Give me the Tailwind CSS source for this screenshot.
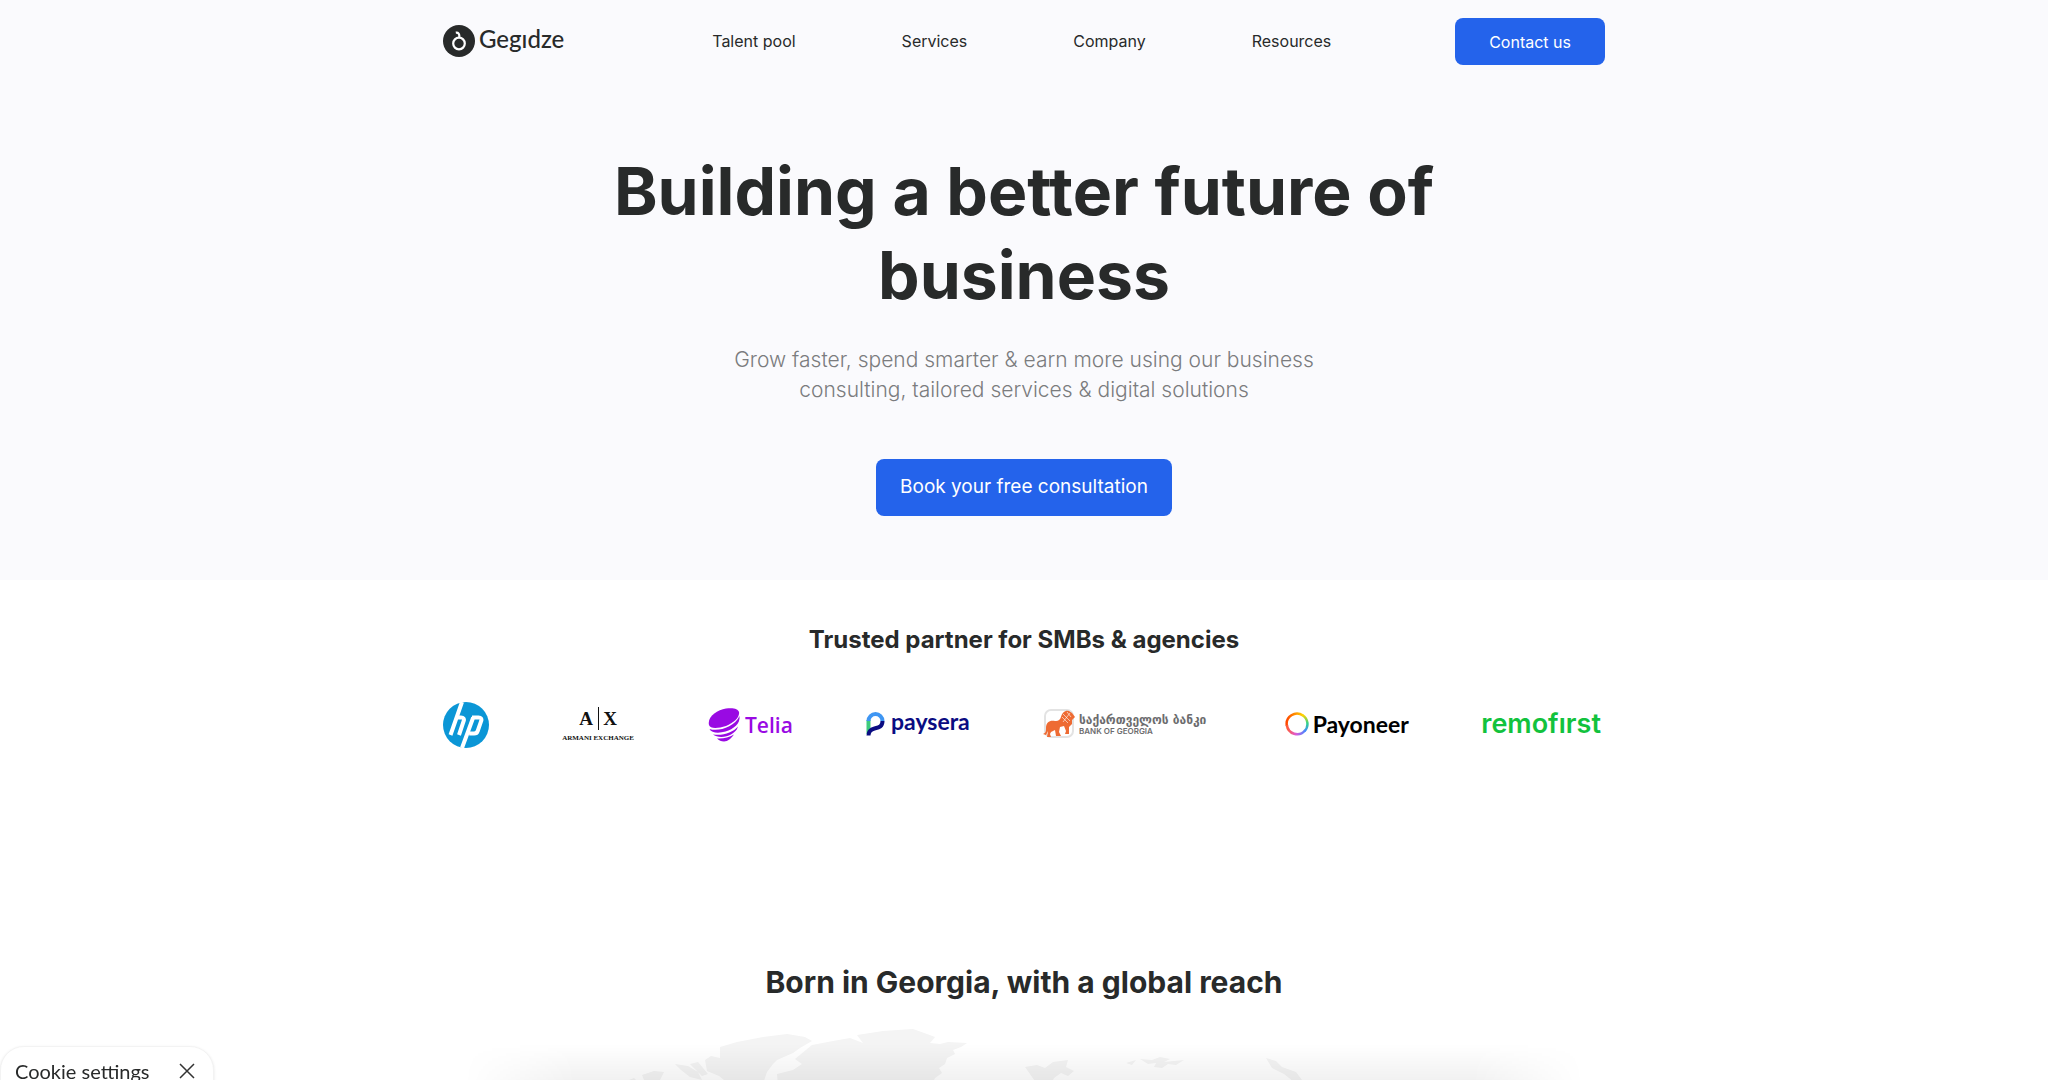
<!DOCTYPE html>
<html lang="en">
<head>
  <meta charset="UTF-8">
  <meta name="viewport" content="width=device-width, initial-scale=1.0">
  <title>Gegidze</title>
  <script src="https://cdn.jsdelivr.net/npm/@tailwindcss/browser@4"></script>
</head>
<body class="bg-white text-[#282a2a] font-['Inter',sans-serif] h-screen overflow-hidden flex flex-col">

  <!-- Hero -->
  <div class="bg-[#fafafd] pb-16 shrink-0">
    <header class="max-w-[1162px] mx-auto pt-[18px] flex items-center justify-between">
      <a href="#" class="flex items-center gap-1 pb-0.5">
        <svg class="size-8" viewBox="0 0 32 32" fill="none">
          <circle cx="16" cy="16" r="16" fill="#282a2a"/>
          <circle cx="16" cy="18.500" r="5.800" stroke="#fff" stroke-width="2.200"/>
          <path d="M12.800 7.600c2.600-.4 3.900 1.400 3.500 4.800" stroke="#fff" stroke-width="2.200"/>
        </svg>
        <span class="text-2xl leading-8 pb-1 font-medium font-['Lato',sans-serif]">Gegıdze</span>
      </a>
      <nav class="flex gap-[106px] ml-6 pb-0.5 text-base">
        <a href="#">Talent pool</a>
        <a href="#">Services</a>
        <a href="#">Company</a>
        <a href="#">Resources</a>
      </nav>
      <button class="bg-[#2463eb] text-white text-base px-[34px] h-[47px] rounded-lg">Contact us</button>
    </header>

    <main class="text-center pt-[84px]">
      <h1 class="max-w-[900px] mx-auto text-[66px] leading-[84px] font-bold">Building a better future of business</h1>
      <p class="max-w-[620px] mx-auto mt-7 text-[21px] leading-[30px] font-light text-[#7b7c7e]">Grow faster, spend smarter &amp; earn more using our business consulting, tailored services &amp; digital solutions</p>
      <button class="mt-[54px] bg-[#2463eb] text-white text-[19px] px-6 h-[57px] rounded-lg">Book your free consultation</button>
    </main>
  </div>

  <!-- Partners -->
  <section class="pt-10 shrink-0">
    <h2 class="text-center text-2xl leading-10 font-bold">Trusted partner for SMBs &amp; agencies</h2>
    <div class="max-w-[1162px] mx-auto mt-10 pr-1 h-[50px] flex items-center justify-between">
      <svg class="size-[46px]" viewBox="0 0 46 46" role="img" aria-label="HP">
        <circle cx="23" cy="23" r="23" fill="#0b96d6"/>
        <g fill="none" stroke="#fff" stroke-width="4">
          <path d="M19 0 7.500 33M12.500 15.500h5.500c2.500 0 3.400 1.200 2.700 3.500L16 33"/>
          <path d="M30.200 15.500 19 46M29 15.500h6.500c2.500 0 3.400 1.200 2.700 3.500l-3.500 10c-.6 1.800-1.700 2.500-3.500 2.500h-5"/>
        </g>
      </svg>

      <svg class="w-[74px] h-10" viewBox="0 0 74 40" text-anchor="middle" font-family="Liberation Serif, serif" fill="#111">
        <text x="25" y="20" font-size="19" font-weight="bold">A</text>
        <path d="M37 2h1v23h-1z"/>
        <text x="49" y="20" font-size="19" font-weight="bold">X</text>
        <text x="37" y="35" font-size="7" font-weight="bold">ARMANI EXCHANGE</text>
      </svg>

      <svg class="w-[86px] h-10" viewBox="0 0 86 40" fill="#990ae3">
        <path d="M1 20C-1 12 9 5 18 3.500c7-1 12 0 13 3.500 1 5-5 11-13 14-8 2.500-16 3-17-1z"/>
        <path d="M1.500 24c9 3 25-2 30-13 1 8-6 13-14 15.500-7 2-14 1.500-16-2.500z"/>
        <path d="M5 29.500c10 1.500 20-2 25-8-1 4-4 6-7 8-5 3-14 3.500-18 0z"/>
        <path d="M9 33.500c6 .5 12-1 17-4-3 4-6 7-10 7-3 0-5-1-7-3z"/>
        <text x="37" y="28" font-size="21" font-weight="600" font-family="Open Sans, sans-serif">Telia</text>
      </svg>

      <svg class="w-[104px] h-10" viewBox="0 0 104 40" fill="none">
        <path d="M2.500 29V15" stroke="#3ecb7d" stroke-width="4"/>
        <path d="M2.500 16a7 7 0 0 1 14 0" stroke="#3f96f3" stroke-width="4"/>
        <path d="M16.500 16c0 6-4 6.500-8 7.500s-6 3-6 7" stroke="#0a0c82" stroke-width="4"/>
        <text x="25" y="25" font-size="23" font-weight="700" font-family="Lato, sans-serif" fill="#0a0c82">paysera</text>
      </svg>

      <svg class="w-[170px] h-10" viewBox="0 0 170 40">
        <rect x="3" y="5" width="28" height="27" rx="6" fill="#fff" stroke="#e3e3e3" stroke-width="2"/>
        <path d="M1 29c3-1 3-3 3-6 0-6 4-8 9-7 3 .5 5-1 6-4 1-4 4-7 8-6l3 2 3 4-3 3v4l-3 3v7h-4l1-3-2-5-4 1-1 5 2 4h-5l-1-6-4 2-1 2 1 3H5l1-6-2 4z" fill="#ee6b33"/>
        <path d="M21 9l7 7M20 12l6 6M25 7l4 5M28 8l-7 9" stroke="#fff" stroke-width=".6"/>
        <g fill="#6c6c6e">
          <text x="37" y="19" font-size="12" font-weight="bold" font-family="DejaVu Sans, sans-serif">საქართველოს ბანკი</text>
          <text x="37" y="29" font-size="8" font-weight="600" font-family="Inter, sans-serif">BANK OF GEORGIA</text>
        </g>
      </svg>

      <div class="flex items-center gap-1 pb-0.5">
        <svg class="size-6" viewBox="0 0 24 24" fill="none" stroke-width="2.500">
          <defs>
            <linearGradient id="warm" x1="0" y1="0" x2="1" y2="0"><stop stop-color="#ff4800"/><stop offset="1" stop-color="#ffd400"/></linearGradient>
            <linearGradient id="cool" x1="0" y1="0" x2="0" y2="1"><stop stop-color="#ffd400"/><stop offset=".5" stop-color="#2fd38b"/><stop offset="1" stop-color="#3f8cff"/></linearGradient>
            <linearGradient id="pink" x1="0" y1="0" x2="1" y2="0"><stop stop-color="#ff5a36"/><stop offset=".5" stop-color="#dd5ad8"/><stop offset="1" stop-color="#4a86ff"/></linearGradient>
          </defs>
          <path d="M1.900 14A10.300 10.300 0 0 1 18 3.600" stroke="url(#warm)"/>
          <path d="M17.500 3.200a10.300 10.300 0 0 1 2 16" stroke="url(#cool)"/>
          <path d="M20 18.500A10.300 10.300 0 0 1 1.900 13" stroke="url(#pink)"/>
        </svg>
        <span class="text-[23px] leading-6 font-bold text-black font-['Lato',sans-serif]">Payoneer</span>
      </div>

      <span class="text-[27px] leading-8 pb-0.5 font-semibold text-[#12c23d]">remofırst</span>
    </div>
  </section>

  <!-- World map -->
  <section class="relative pt-[210px] grow flex flex-col">
    <h2 class="text-center text-[30px] leading-[44px] font-bold">Born in Georgia, with a global reach</h2>
    <div class="max-w-[1180px] w-full mx-auto grow">
      <svg class="w-full h-[80px]" viewBox="0 0 1180 80" fill="#f4f4f4">
        <path d="M286 43l17-5 26-5 24-3 18 3 7 4-12 7-7 5-16 7-4 4-6 8-4 12h-34l-10-8-12-5-2-11 6-4 9 2z"/>
        <path d="M378 41l21-4 17-3 13 5-6-8 26-4 30-2 14 5 8 3-5 6 10 1 8-2 19 1-6 4-8 3 2 4-8 4-2 6-6 4 3 5-7 5-4 8H344l-1-12 16-4 9-6-7-5z"/>
        <path d="M241 60l13 2 10 6 4 8-12-3-9-7zM208 71l12-4 10 1-4 8h-16zM256 60l8-2 10 12-6 2zM190 78l10-4 6 6h-18z"/>
        <path d="M591 63l12-2 8 3 8-6 15-2-2 7 8 4-6 5-7-3-7 5-3 6h-14zM692 59l10-3-4 5zM706 55l12 1 8-3 10 2-6 3 20-2-8 5-8-1-6 4-8-1 2-4-8 1zM832 54l10 3 6 6 14 5 6 8-8 2-10-8-12-6z"/>
      </svg>
    </div>
    <div class="absolute bottom-0 inset-x-0 max-w-[1120px] mx-auto h-10 bg-linear-to-b from-black/0 to-black/6 mask-x-from-90% mask-x-to-100%"></div>
  </section>

  <!-- Cookie bar -->
  <div class="fixed left-0 -bottom-4 w-[214px] h-[50px] bg-white rounded-t-3xl border border-[#f3f3f3] shadow-sm flex items-center justify-between pl-3.5 pr-4 text-xl leading-6 font-['Lato',sans-serif]">
    <span>Cookie settings</span>
    <button aria-label="Close" class="size-5">
      <svg viewBox="0 0 20 20" fill="none" stroke="#333" stroke-width="1.500"><path d="M3 3l14 14M17 3 3 17"/></svg>
    </button>
  </div>
</body>
</html>
